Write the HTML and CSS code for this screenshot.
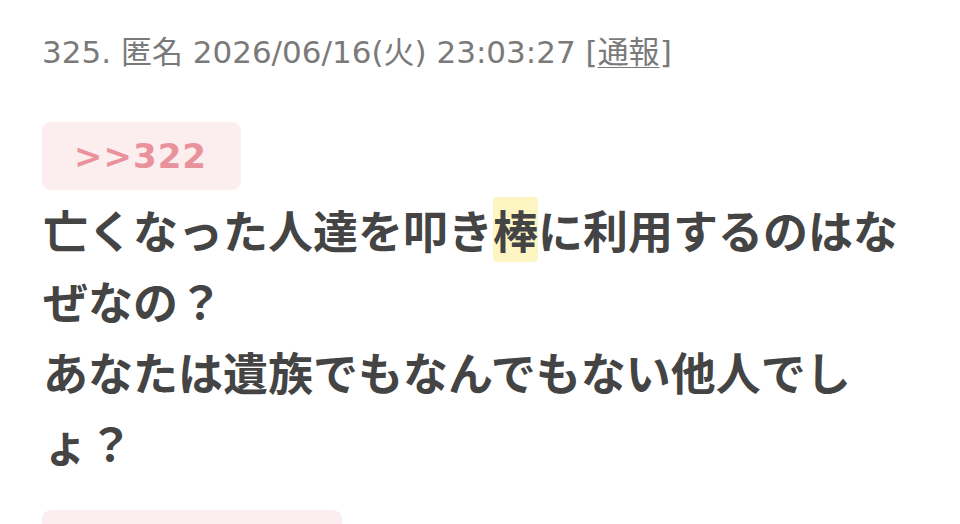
FILE: index.html
```html
<!DOCTYPE html>
<html lang="ja">
<head>
<meta charset="utf-8">
<link rel="stylesheet" href="styles.css">
</head>
<body>
<div class="post">
  <div class="meta">325. 匿名 2026/06/16(火) 23:03:27 [<span class="report">通報</span>]</div>
  <div class="anchor">&gt;&gt;322</div>
  <div class="body">亡くなった人達を叩き<span class="hl">棒</span>に利用するのはなぜなの？<br>あなたは遺族でもなんでもない他人でしょ？</div>
  <div class="anchor next"></div>
</div>
</body>
</html>
```
FILE: styles.css
```css
html, body {
  margin: 0;
  padding: 0;
  background: #fff;
  overflow: hidden;
}
body {
  font-family: "Noto Sans CJK JP", "Noto Sans", sans-serif;
  width: 960px;
  height: 524px;
}
.post {
  padding: 28px 42px 0 42px;
  display: flex;
  flex-direction: column;
  align-items: flex-start;
}
.meta {
  font-family: "DejaVu Sans", "Noto Sans CJK JP", sans-serif;
  font-size: 31px;
  line-height: 48px;
  color: #7a7a7a;
  padding-left: 0;
}
.report {
  text-decoration: underline;
  text-underline-offset: 4px;
  text-decoration-thickness: 1px;
}
.anchor {
  margin-top: 46px;
  width: 199px;
  height: 68px;
  box-sizing: border-box;
  padding-left: 32px;
  background: #fcedee;
  border-radius: 9px;
  color: #e9929b;
  font-family: "DejaVu Sans", "Noto Sans CJK JP", sans-serif;
  font-weight: bold;
  font-size: 34px;
  line-height: 68px;
  letter-spacing: 1px;
}
.body {
  margin-top: 4px;
  font-size: 45px;
  line-height: 71px;
  font-weight: bold;
  color: #444;
  padding-left: 1px;
  width: 880px;
}
.hl {
  background: #fdf6c3;
  border-radius: 4px;
}
.anchor.next {
  margin-top: 32px;
  width: 300px;
}
```
